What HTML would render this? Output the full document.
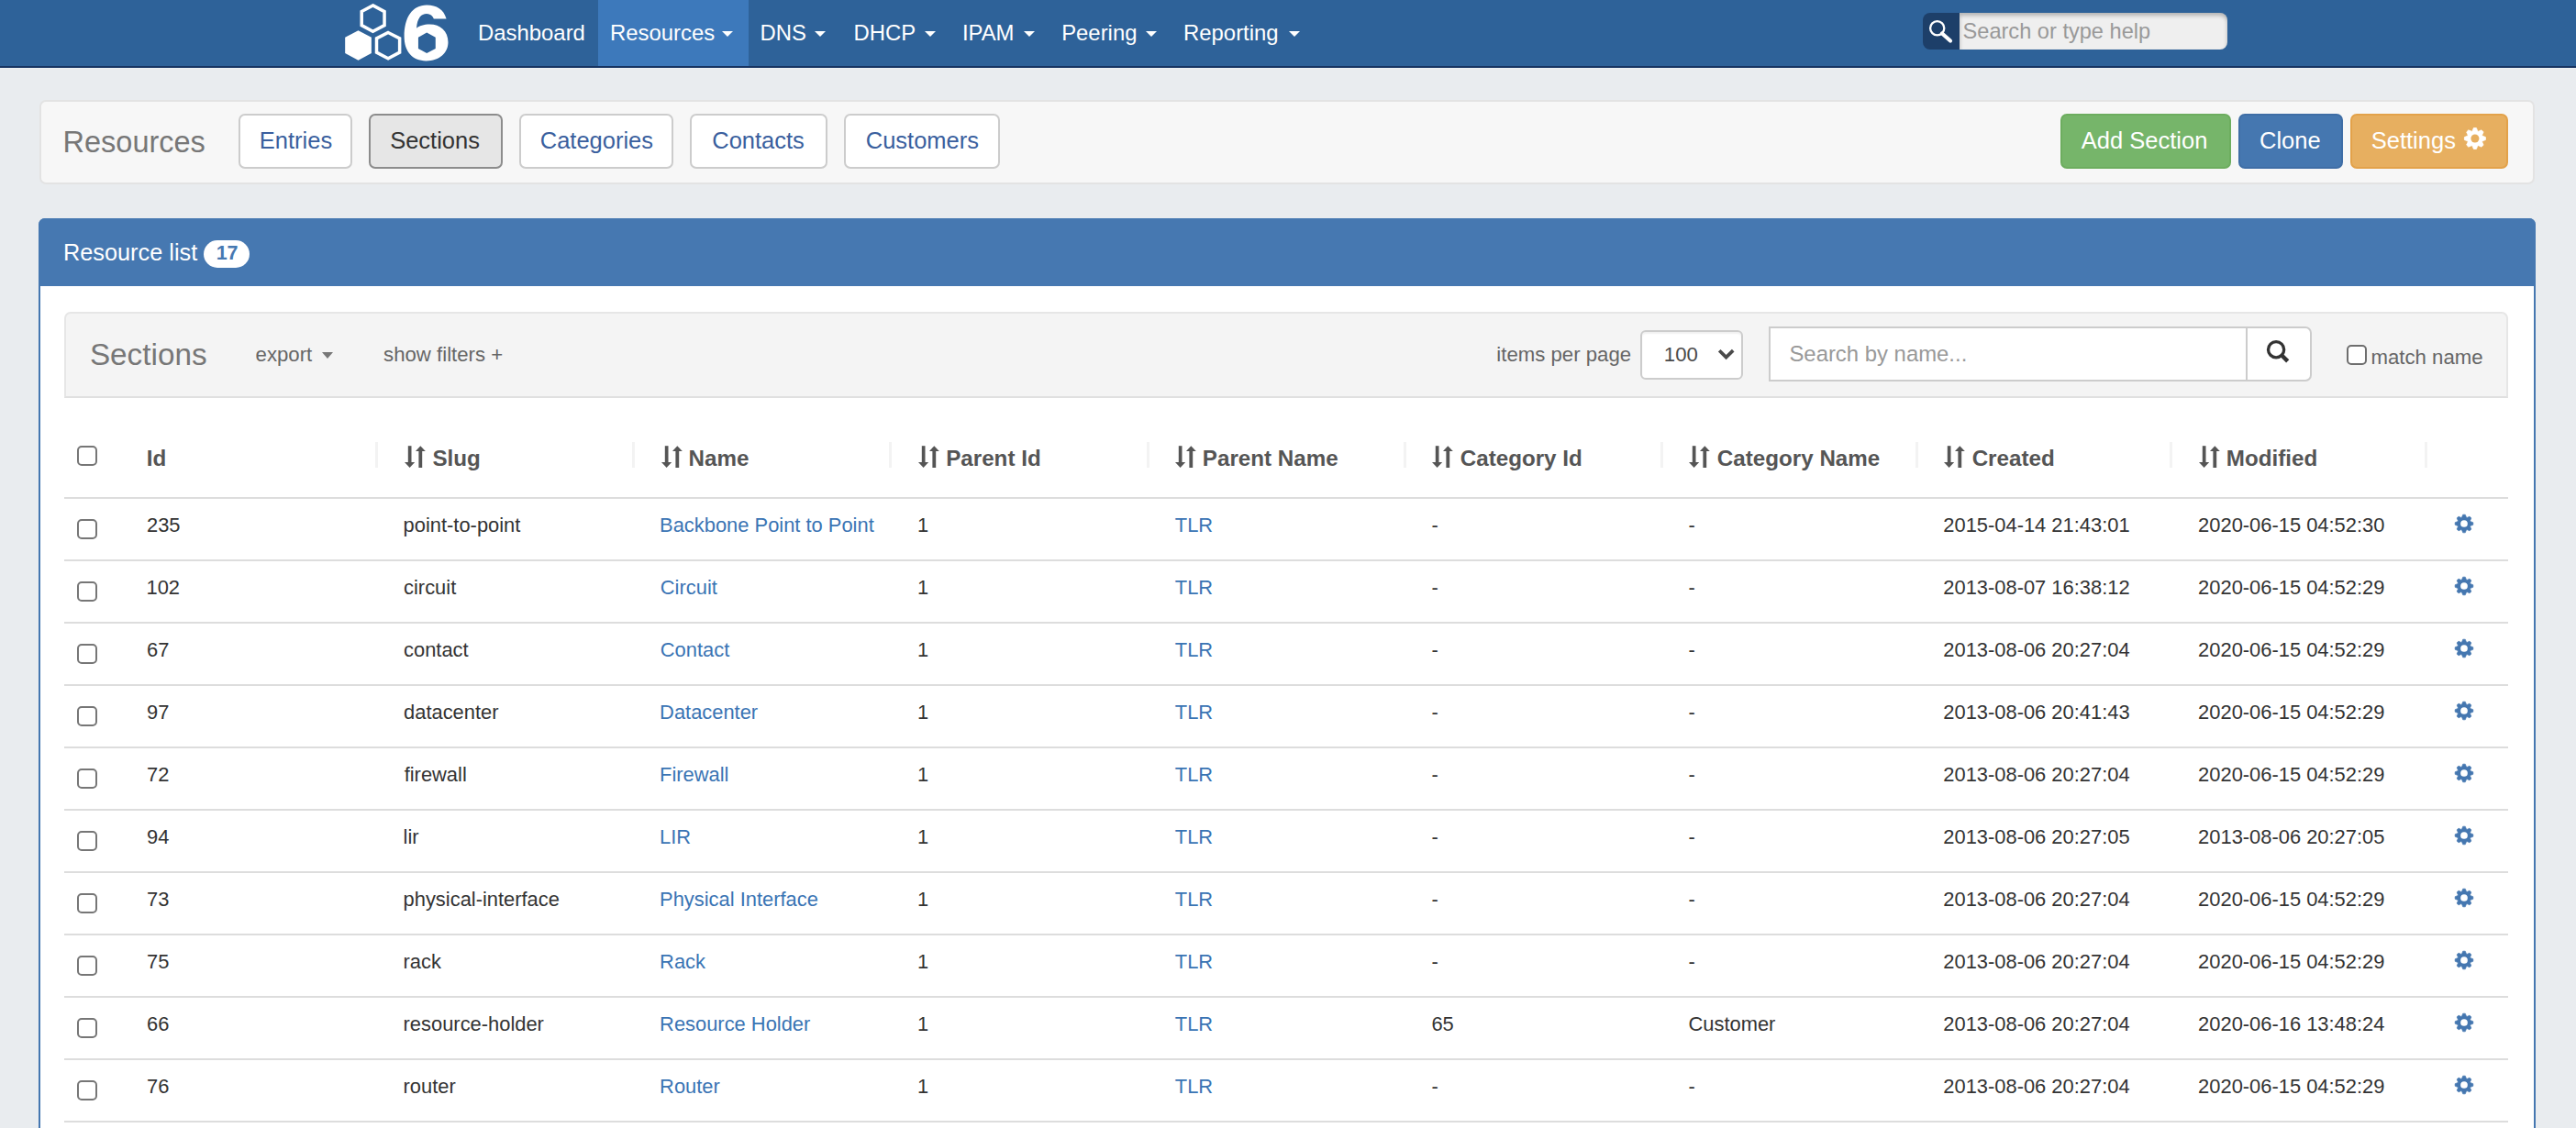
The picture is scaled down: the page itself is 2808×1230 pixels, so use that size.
<!DOCTYPE html><html><head><meta charset="utf-8"><style>
html,body{margin:0;padding:0;overflow:hidden;}
body{width:2808px;height:1230px;overflow:hidden;position:relative;background:#e9ecef;font-family:"Liberation Sans",sans-serif;}
.t{position:absolute;white-space:nowrap;}
.r{position:absolute;box-sizing:border-box;}
</style></head><body>
<div class="r" style="left:0px;top:0px;width:2808px;height:72px;background:#2e6299;"></div>
<div class="r" style="left:0px;top:72px;width:2808px;height:2px;background:#173462;"></div>
<div class="r" style="left:0px;top:74px;width:2808px;height:1px;background:#eef1f3;"></div>
<div class="r" style="left:652px;top:0px;width:164px;height:72px;background:#3d79bb;"></div>
<svg style="position:absolute;left:365px;top:0px" width="130" height="72" viewBox="0 0 2037 1128">
<polygon points="650,92 847,197 847,433 650,538 458,433 458,197" fill="none" stroke="#fff" stroke-width="55"/>
<polygon points="400,520 625,640 625,910 400,1030 175,910 175,640" fill="#fff"/>
<polygon points="910,557 1107,655 1107,895 910,998 713,895 713,655" fill="none" stroke="#fff" stroke-width="55"/>
<path fill="#fff" fill-rule="evenodd" d="M1905,320 C1860,160 1740,85 1570,85 C1320,85 1185,300 1185,620 C1185,880 1320,1040 1560,1040 C1790,1040 1935,900 1935,720 C1935,530 1800,415 1620,415 C1520,415 1440,445 1395,480 C1410,310 1470,235 1570,235 C1630,235 1670,270 1690,320 Z M1570,555 L1720,640 L1720,830 L1570,910 L1425,830 L1425,640 Z"/>
</svg>
<div class="t" style="left:521.03px;top:23.67px;font-size:23.9px;line-height:23.9px;color:#fff;">Dashboard</div>
<div class="t" style="left:665.03px;top:23.67px;font-size:23.9px;line-height:23.9px;color:#fff;">Resources</div>
<div class="t" style="left:828.53px;top:23.67px;font-size:23.9px;line-height:23.9px;color:#fff;">DNS</div>
<div class="t" style="left:930.53px;top:23.67px;font-size:23.9px;line-height:23.9px;color:#fff;">DHCP</div>
<div class="t" style="left:1048.89px;top:23.67px;font-size:23.9px;line-height:23.9px;color:#fff;">IPAM</div>
<div class="t" style="left:1157.13px;top:23.67px;font-size:23.9px;line-height:23.9px;color:#fff;">Peering</div>
<div class="t" style="left:1290.03px;top:23.67px;font-size:23.9px;line-height:23.9px;color:#fff;">Reporting</div>
<div class="r" style="left:786.5px;top:34px;width:0;height:0;border-left:6.75px solid transparent;border-right:6.75px solid transparent;border-top:6.50px solid #fff;"></div>
<div class="r" style="left:888.3px;top:34px;width:0;height:0;border-left:6.75px solid transparent;border-right:6.75px solid transparent;border-top:6.50px solid #fff;"></div>
<div class="r" style="left:1007.9px;top:34px;width:0;height:0;border-left:6.75px solid transparent;border-right:6.75px solid transparent;border-top:6.50px solid #fff;"></div>
<div class="r" style="left:1116.2px;top:34px;width:0;height:0;border-left:6.75px solid transparent;border-right:6.75px solid transparent;border-top:6.50px solid #fff;"></div>
<div class="r" style="left:1249.2px;top:34px;width:0;height:0;border-left:6.75px solid transparent;border-right:6.75px solid transparent;border-top:6.50px solid #fff;"></div>
<div class="r" style="left:1404.5px;top:34px;width:0;height:0;border-left:6.75px solid transparent;border-right:6.75px solid transparent;border-top:6.50px solid #fff;"></div>
<div class="r" style="left:2096px;top:14px;width:40px;height:40px;background:#1d3f69;border-radius:8px 0 0 8px;"></div>
<div class="r" style="left:2136px;top:14px;width:292px;height:40px;background:#efefef;border-radius:0 8px 8px 0;box-shadow:inset 0 3px 4px rgba(0,0,0,0.25);"></div>
<svg style="position:absolute;left:2096px;top:14px" width="40" height="40" viewBox="0 0 40 40">
<circle cx="15.7" cy="16.7" r="7.6" fill="none" stroke="#fff" stroke-width="2.3"/>
<line x1="21" y1="22.5" x2="30" y2="30.5" stroke="#fff" stroke-width="4.2" stroke-linecap="round"/>
</svg>
<div class="t" style="left:2139.54px;top:22.62px;font-size:23.6px;line-height:23.6px;color:#999;">Search or type help</div>
<div class="r" style="left:43px;top:109px;width:2720px;height:92px;background:#f7f7f7;border:2px solid #e3e3e3;border-radius:7px;"></div>
<div class="t" style="left:68.52px;top:138.89px;font-size:32.5px;line-height:32.5px;color:#777;">Resources</div>
<div class="r" style="left:260px;top:124px;width:124px;height:60px;background:#fff;border:2px solid #ccc;border-radius:7px;"></div>
<div class="r" style="left:402px;top:124px;width:146px;height:60px;background:#e6e6e6;border:2px solid #8c8c8c;border-radius:7px;"></div>
<div class="r" style="left:566px;top:124px;width:168px;height:60px;background:#fff;border:2px solid #ccc;border-radius:7px;"></div>
<div class="r" style="left:752px;top:124px;width:149.5px;height:60px;background:#fff;border:2px solid #ccc;border-radius:7px;"></div>
<div class="r" style="left:920px;top:124px;width:170px;height:60px;background:#fff;border:2px solid #ccc;border-radius:7px;"></div>
<div class="t" style="left:282.80px;top:141.21px;font-size:25.5px;line-height:25.5px;color:#3a5f9e;">Entries</div>
<div class="t" style="left:425.15px;top:141.21px;font-size:25.5px;line-height:25.5px;color:#333;">Sections</div>
<div class="t" style="left:588.73px;top:141.21px;font-size:25.5px;line-height:25.5px;color:#3a5f9e;">Categories</div>
<div class="t" style="left:776.23px;top:141.21px;font-size:25.5px;line-height:25.5px;color:#3a5f9e;">Contacts</div>
<div class="t" style="left:943.73px;top:141.21px;font-size:25.5px;line-height:25.5px;color:#3a5f9e;">Customers</div>
<div class="r" style="left:2246px;top:124px;width:186px;height:60px;background:#76b56a;border:2px solid #6dad5f;border-radius:7px;"></div>
<div class="r" style="left:2440px;top:124px;width:114px;height:60px;background:#4577b0;border:2px solid #3f6ea6;border-radius:7px;"></div>
<div class="r" style="left:2562px;top:124px;width:172px;height:60px;background:#e7af60;border:2px solid #e3a24a;border-radius:7px;"></div>
<div class="t" style="left:2268.84px;top:141.01px;font-size:25.5px;line-height:25.5px;color:#fff;">Add Section</div>
<div class="t" style="left:2463.03px;top:141.01px;font-size:25.5px;line-height:25.5px;color:#fff;">Clone</div>
<div class="t" style="left:2584.75px;top:141.01px;font-size:25.5px;line-height:25.5px;color:#fff;">Settings</div>
<svg style="position:absolute;left:2680px;top:135px" width="36" height="36" viewBox="0 0 36 36"><path d="M15.12,7.88 L16.40,4.50 L19.40,4.50 L20.68,7.88 A8.58,8.58 0 0 1 21.68,8.29 L24.97,6.80 L27.10,8.93 L25.61,12.22 A8.58,8.58 0 0 1 26.02,13.22 L29.40,14.50 L29.40,17.50 L26.02,18.78 A8.58,8.58 0 0 1 25.61,19.78 L27.10,23.07 L24.97,25.20 L21.68,23.71 A8.58,8.58 0 0 1 20.68,24.12 L19.40,27.50 L16.40,27.50 L15.12,24.12 A8.58,8.58 0 0 1 14.12,23.71 L10.83,25.20 L8.70,23.07 L10.19,19.78 A8.58,8.58 0 0 1 9.78,18.78 L6.40,17.50 L6.40,14.50 L9.78,13.22 A8.58,8.58 0 0 1 10.19,12.22 L8.70,8.93 L10.83,6.80 L14.12,8.29 A8.58,8.58 0 0 1 15.12,7.88 Z" fill="#fff" stroke="#fff" stroke-width="0.81" stroke-linejoin="round"/><circle cx="17.9" cy="16.0" r="4.52" fill="#e7af60"/></svg>
<div class="r" style="left:42px;top:238px;width:2722px;height:992px;background:#fff;border:2px solid #4577b0;border-bottom:0;border-radius:7px 7px 0 0;"></div>
<div class="r" style="left:42px;top:238px;width:2722px;height:74px;background:#4678b1;border-radius:7px 7px 0 0;"></div>
<div class="t" style="left:69.01px;top:262.98px;font-size:25.3px;line-height:25.3px;color:#fff;">Resource list</div>
<div class="r" style="left:222px;top:262px;width:50px;height:30px;background:#fff;border-radius:15px;"></div>
<div class="t" style="left:235.66px;top:265.70px;font-size:21.5px;line-height:21.5px;color:#4678b1;font-weight:bold;">17</div>
<div class="r" style="left:70px;top:340px;width:2664px;height:94px;background:#f4f4f4;border:2px solid #e6e6e6;border-bottom-color:#e0e0e0;border-radius:7px 7px 0 0;"></div>
<div class="t" style="left:97.90px;top:369.91px;font-size:33.3px;line-height:33.3px;color:#777;">Sections</div>
<div class="t" style="left:278.56px;top:375.51px;font-size:22.2px;line-height:22.2px;color:#666;">export</div>
<div class="r" style="left:350.8px;top:384px;width:0;height:0;border-left:6.50px solid transparent;border-right:6.50px solid transparent;border-top:7.70px solid #777;"></div>
<div class="t" style="left:418.09px;top:375.51px;font-size:22.2px;line-height:22.2px;color:#666;">show filters +</div>
<div class="t" style="left:1631.30px;top:375.51px;font-size:22.2px;line-height:22.2px;color:#666;">items per page</div>
<div class="r" style="left:1788px;top:360px;width:112px;height:54px;background:#fff;border:2px solid #ccc;border-radius:6px;box-shadow:inset 0 2px 2px rgba(0,0,0,0.06);"></div>
<div class="t" style="left:1813.84px;top:375.51px;font-size:22.2px;line-height:22.2px;color:#4a4a4a;">100</div>
<svg style="position:absolute;left:1870px;top:377px" width="24" height="18" viewBox="0 0 24 18"><polyline points="4.2,5.2 11.6,12.6 19.2,5.2" fill="none" stroke="#4a4a4a" stroke-width="3.7"/></svg>
<div class="r" style="left:1928px;top:356px;width:592px;height:60px;background:#fff;border:2px solid #ccc;border-radius:0 7px 7px 0;"></div>
<div class="r" style="left:2448px;top:356px;width:2px;height:60px;background:#ccc;"></div>
<div class="t" style="left:1950.42px;top:374.07px;font-size:23.9px;line-height:23.9px;color:#999;">Search by name...</div>
<svg style="position:absolute;left:2466px;top:368px" width="34" height="34" viewBox="0 0 34 34"><circle cx="15.1" cy="13.2" r="8.6" fill="none" stroke="#333" stroke-width="3.3"/><line x1="20.8" y1="19" x2="27.7" y2="25.9" stroke="#333" stroke-width="4.4" stroke-linecap="butt"/></svg>
<div class="r" style="left:2558px;top:376px;width:22px;height:22px;background:#fff;border:2px solid #6e6e6e;border-radius:5px;"></div>
<div class="t" style="left:2584.50px;top:379.21px;font-size:22.2px;line-height:22.2px;color:#666;">match name</div>
<div class="r" style="left:84px;top:486px;width:22px;height:22px;background:#fff;border:2px solid #767676;border-radius:5px;"></div>
<div class="t" style="left:159.77px;top:487.51px;font-size:24.2px;line-height:24.2px;color:#555;font-weight:bold;">Id</div>
<div class="r" style="left:409px;top:482px;width:3px;height:28px;background:#f3f3f3;"></div>
<div class="r" style="left:689px;top:482px;width:3px;height:28px;background:#f3f3f3;"></div>
<div class="r" style="left:969px;top:482px;width:3px;height:28px;background:#f3f3f3;"></div>
<div class="r" style="left:1249.5px;top:482px;width:3px;height:28px;background:#f3f3f3;"></div>
<div class="r" style="left:1529.5px;top:482px;width:3px;height:28px;background:#f3f3f3;"></div>
<div class="r" style="left:1809.5px;top:482px;width:3px;height:28px;background:#f3f3f3;"></div>
<div class="r" style="left:2087.5px;top:482px;width:3px;height:28px;background:#f3f3f3;"></div>
<div class="r" style="left:2365.3px;top:482px;width:3px;height:28px;background:#f3f3f3;"></div>
<div class="r" style="left:2643.2px;top:482px;width:3px;height:28px;background:#f3f3f3;"></div>
<svg style="position:absolute;left:439.7px;top:484px" width="26" height="28" viewBox="0 0 26 28">
<rect x="4.8" y="2.2" width="3.7" height="19" fill="#555"/><polygon points="1,20 12.2,20 6.6,26" fill="#555"/>
<rect x="16.4" y="7" width="3.8" height="19" fill="#555"/><polygon points="13,8 23.8,8 18.3,2.2" fill="#555"/>
</svg>
<div class="t" style="left:471.47px;top:487.51px;font-size:24.2px;line-height:24.2px;color:#555;font-weight:bold;">Slug</div>
<svg style="position:absolute;left:719.6px;top:484px" width="26" height="28" viewBox="0 0 26 28">
<rect x="4.8" y="2.2" width="3.7" height="19" fill="#555"/><polygon points="1,20 12.2,20 6.6,26" fill="#555"/>
<rect x="16.4" y="7" width="3.8" height="19" fill="#555"/><polygon points="13,8 23.8,8 18.3,2.2" fill="#555"/>
</svg>
<div class="t" style="left:750.47px;top:487.51px;font-size:24.2px;line-height:24.2px;color:#555;font-weight:bold;">Name</div>
<svg style="position:absolute;left:1000.3px;top:484px" width="26" height="28" viewBox="0 0 26 28">
<rect x="4.8" y="2.2" width="3.7" height="19" fill="#555"/><polygon points="1,20 12.2,20 6.6,26" fill="#555"/>
<rect x="16.4" y="7" width="3.8" height="19" fill="#555"/><polygon points="13,8 23.8,8 18.3,2.2" fill="#555"/>
</svg>
<div class="t" style="left:1031.17px;top:487.51px;font-size:24.2px;line-height:24.2px;color:#555;font-weight:bold;">Parent Id</div>
<svg style="position:absolute;left:1280.0px;top:484px" width="26" height="28" viewBox="0 0 26 28">
<rect x="4.8" y="2.2" width="3.7" height="19" fill="#555"/><polygon points="1,20 12.2,20 6.6,26" fill="#555"/>
<rect x="16.4" y="7" width="3.8" height="19" fill="#555"/><polygon points="13,8 23.8,8 18.3,2.2" fill="#555"/>
</svg>
<div class="t" style="left:1310.87px;top:487.51px;font-size:24.2px;line-height:24.2px;color:#555;font-weight:bold;">Parent Name</div>
<svg style="position:absolute;left:1560.2px;top:484px" width="26" height="28" viewBox="0 0 26 28">
<rect x="4.8" y="2.2" width="3.7" height="19" fill="#555"/><polygon points="1,20 12.2,20 6.6,26" fill="#555"/>
<rect x="16.4" y="7" width="3.8" height="19" fill="#555"/><polygon points="13,8 23.8,8 18.3,2.2" fill="#555"/>
</svg>
<div class="t" style="left:1591.73px;top:487.51px;font-size:24.2px;line-height:24.2px;color:#555;font-weight:bold;">Category Id</div>
<svg style="position:absolute;left:1840.3px;top:484px" width="26" height="28" viewBox="0 0 26 28">
<rect x="4.8" y="2.2" width="3.7" height="19" fill="#555"/><polygon points="1,20 12.2,20 6.6,26" fill="#555"/>
<rect x="16.4" y="7" width="3.8" height="19" fill="#555"/><polygon points="13,8 23.8,8 18.3,2.2" fill="#555"/>
</svg>
<div class="t" style="left:1871.83px;top:487.51px;font-size:24.2px;line-height:24.2px;color:#555;font-weight:bold;">Category Name</div>
<svg style="position:absolute;left:2118.1px;top:484px" width="26" height="28" viewBox="0 0 26 28">
<rect x="4.8" y="2.2" width="3.7" height="19" fill="#555"/><polygon points="1,20 12.2,20 6.6,26" fill="#555"/>
<rect x="16.4" y="7" width="3.8" height="19" fill="#555"/><polygon points="13,8 23.8,8 18.3,2.2" fill="#555"/>
</svg>
<div class="t" style="left:2149.63px;top:487.51px;font-size:24.2px;line-height:24.2px;color:#555;font-weight:bold;">Created</div>
<svg style="position:absolute;left:2395.9px;top:484px" width="26" height="28" viewBox="0 0 26 28">
<rect x="4.8" y="2.2" width="3.7" height="19" fill="#555"/><polygon points="1,20 12.2,20 6.6,26" fill="#555"/>
<rect x="16.4" y="7" width="3.8" height="19" fill="#555"/><polygon points="13,8 23.8,8 18.3,2.2" fill="#555"/>
</svg>
<div class="t" style="left:2426.77px;top:487.51px;font-size:24.2px;line-height:24.2px;color:#555;font-weight:bold;">Modified</div>
<div class="r" style="left:70px;top:542px;width:2664px;height:2px;background:#ddd;"></div>
<div class="r" style="left:84px;top:566px;width:22px;height:22px;background:#fff;border:2px solid #767676;border-radius:5px;"></div>
<div class="t" style="left:160.01px;top:562.46px;font-size:21.9px;line-height:21.9px;color:#333;">235</div>
<div class="t" style="left:439.58px;top:562.46px;font-size:21.9px;line-height:21.9px;color:#333;">point-to-point</div>
<div class="t" style="left:719.09px;top:562.46px;font-size:21.9px;line-height:21.9px;color:#3a74b4;">Backbone Point to Point</div>
<div class="t" style="left:999.96px;top:562.46px;font-size:21.9px;line-height:21.9px;color:#333;">1</div>
<div class="t" style="left:1280.81px;top:562.46px;font-size:21.9px;line-height:21.9px;color:#3a74b4;">TLR</div>
<div class="t" style="left:1560.51px;top:562.46px;font-size:21.9px;line-height:21.9px;color:#333;">-</div>
<div class="t" style="left:1840.61px;top:562.46px;font-size:21.9px;line-height:21.9px;color:#333;">-</div>
<div class="t" style="left:2118.31px;top:562.46px;font-size:21.9px;line-height:21.9px;color:#333;">2015-04-14 21:43:01</div>
<div class="t" style="left:2396.11px;top:562.46px;font-size:21.9px;line-height:21.9px;color:#333;">2020-06-15 04:52:30</div>
<svg style="position:absolute;left:2673.8px;top:559.4px" width="24" height="24" viewBox="0 0 24 24"><path d="M9.63,5.07 L10.72,2.18 L13.28,2.18 L14.37,5.07 A7.33,7.33 0 0 1 15.22,5.42 L18.03,4.15 L19.85,5.97 L18.58,8.78 A7.33,7.33 0 0 1 18.93,9.63 L21.82,10.72 L21.82,13.28 L18.93,14.37 A7.33,7.33 0 0 1 18.58,15.22 L19.85,18.03 L18.03,19.85 L15.22,18.58 A7.33,7.33 0 0 1 14.37,18.93 L13.28,21.82 L10.72,21.82 L9.63,18.93 A7.33,7.33 0 0 1 8.78,18.58 L5.97,19.85 L4.15,18.03 L5.42,15.22 A7.33,7.33 0 0 1 5.07,14.37 L2.18,13.28 L2.18,10.72 L5.07,9.63 A7.33,7.33 0 0 1 5.42,8.78 L4.15,5.97 L5.97,4.15 L8.78,5.42 A7.33,7.33 0 0 1 9.63,5.07 Z" fill="#4577b0" stroke="#4577b0" stroke-width="0.69" stroke-linejoin="round"/><circle cx="12" cy="12" r="3.86" fill="#fff"/></svg>
<div class="r" style="left:70px;top:610px;width:2664px;height:2px;background:#ddd;"></div>
<div class="r" style="left:84px;top:634px;width:22px;height:22px;background:#fff;border:2px solid #767676;border-radius:5px;"></div>
<div class="t" style="left:159.46px;top:630.46px;font-size:21.9px;line-height:21.9px;color:#333;">102</div>
<div class="t" style="left:440.07px;top:630.46px;font-size:21.9px;line-height:21.9px;color:#333;">circuit</div>
<div class="t" style="left:719.80px;top:630.46px;font-size:21.9px;line-height:21.9px;color:#3a74b4;">Circuit</div>
<div class="t" style="left:999.96px;top:630.46px;font-size:21.9px;line-height:21.9px;color:#333;">1</div>
<div class="t" style="left:1280.81px;top:630.46px;font-size:21.9px;line-height:21.9px;color:#3a74b4;">TLR</div>
<div class="t" style="left:1560.51px;top:630.46px;font-size:21.9px;line-height:21.9px;color:#333;">-</div>
<div class="t" style="left:1840.61px;top:630.46px;font-size:21.9px;line-height:21.9px;color:#333;">-</div>
<div class="t" style="left:2118.31px;top:630.46px;font-size:21.9px;line-height:21.9px;color:#333;">2013-08-07 16:38:12</div>
<div class="t" style="left:2396.11px;top:630.46px;font-size:21.9px;line-height:21.9px;color:#333;">2020-06-15 04:52:29</div>
<svg style="position:absolute;left:2673.8px;top:627.4px" width="24" height="24" viewBox="0 0 24 24"><path d="M9.63,5.07 L10.72,2.18 L13.28,2.18 L14.37,5.07 A7.33,7.33 0 0 1 15.22,5.42 L18.03,4.15 L19.85,5.97 L18.58,8.78 A7.33,7.33 0 0 1 18.93,9.63 L21.82,10.72 L21.82,13.28 L18.93,14.37 A7.33,7.33 0 0 1 18.58,15.22 L19.85,18.03 L18.03,19.85 L15.22,18.58 A7.33,7.33 0 0 1 14.37,18.93 L13.28,21.82 L10.72,21.82 L9.63,18.93 A7.33,7.33 0 0 1 8.78,18.58 L5.97,19.85 L4.15,18.03 L5.42,15.22 A7.33,7.33 0 0 1 5.07,14.37 L2.18,13.28 L2.18,10.72 L5.07,9.63 A7.33,7.33 0 0 1 5.42,8.78 L4.15,5.97 L5.97,4.15 L8.78,5.42 A7.33,7.33 0 0 1 9.63,5.07 Z" fill="#4577b0" stroke="#4577b0" stroke-width="0.69" stroke-linejoin="round"/><circle cx="12" cy="12" r="3.86" fill="#fff"/></svg>
<div class="r" style="left:70px;top:678px;width:2664px;height:2px;background:#ddd;"></div>
<div class="r" style="left:84px;top:702px;width:22px;height:22px;background:#fff;border:2px solid #767676;border-radius:5px;"></div>
<div class="t" style="left:160.01px;top:698.46px;font-size:21.9px;line-height:21.9px;color:#333;">67</div>
<div class="t" style="left:440.07px;top:698.46px;font-size:21.9px;line-height:21.9px;color:#333;">contact</div>
<div class="t" style="left:719.80px;top:698.46px;font-size:21.9px;line-height:21.9px;color:#3a74b4;">Contact</div>
<div class="t" style="left:999.96px;top:698.46px;font-size:21.9px;line-height:21.9px;color:#333;">1</div>
<div class="t" style="left:1280.81px;top:698.46px;font-size:21.9px;line-height:21.9px;color:#3a74b4;">TLR</div>
<div class="t" style="left:1560.51px;top:698.46px;font-size:21.9px;line-height:21.9px;color:#333;">-</div>
<div class="t" style="left:1840.61px;top:698.46px;font-size:21.9px;line-height:21.9px;color:#333;">-</div>
<div class="t" style="left:2118.31px;top:698.46px;font-size:21.9px;line-height:21.9px;color:#333;">2013-08-06 20:27:04</div>
<div class="t" style="left:2396.11px;top:698.46px;font-size:21.9px;line-height:21.9px;color:#333;">2020-06-15 04:52:29</div>
<svg style="position:absolute;left:2673.8px;top:695.4px" width="24" height="24" viewBox="0 0 24 24"><path d="M9.63,5.07 L10.72,2.18 L13.28,2.18 L14.37,5.07 A7.33,7.33 0 0 1 15.22,5.42 L18.03,4.15 L19.85,5.97 L18.58,8.78 A7.33,7.33 0 0 1 18.93,9.63 L21.82,10.72 L21.82,13.28 L18.93,14.37 A7.33,7.33 0 0 1 18.58,15.22 L19.85,18.03 L18.03,19.85 L15.22,18.58 A7.33,7.33 0 0 1 14.37,18.93 L13.28,21.82 L10.72,21.82 L9.63,18.93 A7.33,7.33 0 0 1 8.78,18.58 L5.97,19.85 L4.15,18.03 L5.42,15.22 A7.33,7.33 0 0 1 5.07,14.37 L2.18,13.28 L2.18,10.72 L5.07,9.63 A7.33,7.33 0 0 1 5.42,8.78 L4.15,5.97 L5.97,4.15 L8.78,5.42 A7.33,7.33 0 0 1 9.63,5.07 Z" fill="#4577b0" stroke="#4577b0" stroke-width="0.69" stroke-linejoin="round"/><circle cx="12" cy="12" r="3.86" fill="#fff"/></svg>
<div class="r" style="left:70px;top:746px;width:2664px;height:2px;background:#ddd;"></div>
<div class="r" style="left:84px;top:770px;width:22px;height:22px;background:#fff;border:2px solid #767676;border-radius:5px;"></div>
<div class="t" style="left:160.06px;top:766.46px;font-size:21.9px;line-height:21.9px;color:#333;">97</div>
<div class="t" style="left:440.07px;top:766.46px;font-size:21.9px;line-height:21.9px;color:#333;">datacenter</div>
<div class="t" style="left:719.09px;top:766.46px;font-size:21.9px;line-height:21.9px;color:#3a74b4;">Datacenter</div>
<div class="t" style="left:999.96px;top:766.46px;font-size:21.9px;line-height:21.9px;color:#333;">1</div>
<div class="t" style="left:1280.81px;top:766.46px;font-size:21.9px;line-height:21.9px;color:#3a74b4;">TLR</div>
<div class="t" style="left:1560.51px;top:766.46px;font-size:21.9px;line-height:21.9px;color:#333;">-</div>
<div class="t" style="left:1840.61px;top:766.46px;font-size:21.9px;line-height:21.9px;color:#333;">-</div>
<div class="t" style="left:2118.31px;top:766.46px;font-size:21.9px;line-height:21.9px;color:#333;">2013-08-06 20:41:43</div>
<div class="t" style="left:2396.11px;top:766.46px;font-size:21.9px;line-height:21.9px;color:#333;">2020-06-15 04:52:29</div>
<svg style="position:absolute;left:2673.8px;top:763.4px" width="24" height="24" viewBox="0 0 24 24"><path d="M9.63,5.07 L10.72,2.18 L13.28,2.18 L14.37,5.07 A7.33,7.33 0 0 1 15.22,5.42 L18.03,4.15 L19.85,5.97 L18.58,8.78 A7.33,7.33 0 0 1 18.93,9.63 L21.82,10.72 L21.82,13.28 L18.93,14.37 A7.33,7.33 0 0 1 18.58,15.22 L19.85,18.03 L18.03,19.85 L15.22,18.58 A7.33,7.33 0 0 1 14.37,18.93 L13.28,21.82 L10.72,21.82 L9.63,18.93 A7.33,7.33 0 0 1 8.78,18.58 L5.97,19.85 L4.15,18.03 L5.42,15.22 A7.33,7.33 0 0 1 5.07,14.37 L2.18,13.28 L2.18,10.72 L5.07,9.63 A7.33,7.33 0 0 1 5.42,8.78 L4.15,5.97 L5.97,4.15 L8.78,5.42 A7.33,7.33 0 0 1 9.63,5.07 Z" fill="#4577b0" stroke="#4577b0" stroke-width="0.69" stroke-linejoin="round"/><circle cx="12" cy="12" r="3.86" fill="#fff"/></svg>
<div class="r" style="left:70px;top:814px;width:2664px;height:2px;background:#ddd;"></div>
<div class="r" style="left:84px;top:838px;width:22px;height:22px;background:#fff;border:2px solid #767676;border-radius:5px;"></div>
<div class="t" style="left:160.01px;top:834.46px;font-size:21.9px;line-height:21.9px;color:#333;">72</div>
<div class="t" style="left:440.67px;top:834.46px;font-size:21.9px;line-height:21.9px;color:#333;">firewall</div>
<div class="t" style="left:719.09px;top:834.46px;font-size:21.9px;line-height:21.9px;color:#3a74b4;">Firewall</div>
<div class="t" style="left:999.96px;top:834.46px;font-size:21.9px;line-height:21.9px;color:#333;">1</div>
<div class="t" style="left:1280.81px;top:834.46px;font-size:21.9px;line-height:21.9px;color:#3a74b4;">TLR</div>
<div class="t" style="left:1560.51px;top:834.46px;font-size:21.9px;line-height:21.9px;color:#333;">-</div>
<div class="t" style="left:1840.61px;top:834.46px;font-size:21.9px;line-height:21.9px;color:#333;">-</div>
<div class="t" style="left:2118.31px;top:834.46px;font-size:21.9px;line-height:21.9px;color:#333;">2013-08-06 20:27:04</div>
<div class="t" style="left:2396.11px;top:834.46px;font-size:21.9px;line-height:21.9px;color:#333;">2020-06-15 04:52:29</div>
<svg style="position:absolute;left:2673.8px;top:831.4px" width="24" height="24" viewBox="0 0 24 24"><path d="M9.63,5.07 L10.72,2.18 L13.28,2.18 L14.37,5.07 A7.33,7.33 0 0 1 15.22,5.42 L18.03,4.15 L19.85,5.97 L18.58,8.78 A7.33,7.33 0 0 1 18.93,9.63 L21.82,10.72 L21.82,13.28 L18.93,14.37 A7.33,7.33 0 0 1 18.58,15.22 L19.85,18.03 L18.03,19.85 L15.22,18.58 A7.33,7.33 0 0 1 14.37,18.93 L13.28,21.82 L10.72,21.82 L9.63,18.93 A7.33,7.33 0 0 1 8.78,18.58 L5.97,19.85 L4.15,18.03 L5.42,15.22 A7.33,7.33 0 0 1 5.07,14.37 L2.18,13.28 L2.18,10.72 L5.07,9.63 A7.33,7.33 0 0 1 5.42,8.78 L4.15,5.97 L5.97,4.15 L8.78,5.42 A7.33,7.33 0 0 1 9.63,5.07 Z" fill="#4577b0" stroke="#4577b0" stroke-width="0.69" stroke-linejoin="round"/><circle cx="12" cy="12" r="3.86" fill="#fff"/></svg>
<div class="r" style="left:70px;top:882px;width:2664px;height:2px;background:#ddd;"></div>
<div class="r" style="left:84px;top:906px;width:22px;height:22px;background:#fff;border:2px solid #767676;border-radius:5px;"></div>
<div class="t" style="left:160.06px;top:902.46px;font-size:21.9px;line-height:21.9px;color:#333;">94</div>
<div class="t" style="left:439.52px;top:902.46px;font-size:21.9px;line-height:21.9px;color:#333;">lir</div>
<div class="t" style="left:719.09px;top:902.46px;font-size:21.9px;line-height:21.9px;color:#3a74b4;">LIR</div>
<div class="t" style="left:999.96px;top:902.46px;font-size:21.9px;line-height:21.9px;color:#333;">1</div>
<div class="t" style="left:1280.81px;top:902.46px;font-size:21.9px;line-height:21.9px;color:#3a74b4;">TLR</div>
<div class="t" style="left:1560.51px;top:902.46px;font-size:21.9px;line-height:21.9px;color:#333;">-</div>
<div class="t" style="left:1840.61px;top:902.46px;font-size:21.9px;line-height:21.9px;color:#333;">-</div>
<div class="t" style="left:2118.31px;top:902.46px;font-size:21.9px;line-height:21.9px;color:#333;">2013-08-06 20:27:05</div>
<div class="t" style="left:2396.11px;top:902.46px;font-size:21.9px;line-height:21.9px;color:#333;">2013-08-06 20:27:05</div>
<svg style="position:absolute;left:2673.8px;top:899.4px" width="24" height="24" viewBox="0 0 24 24"><path d="M9.63,5.07 L10.72,2.18 L13.28,2.18 L14.37,5.07 A7.33,7.33 0 0 1 15.22,5.42 L18.03,4.15 L19.85,5.97 L18.58,8.78 A7.33,7.33 0 0 1 18.93,9.63 L21.82,10.72 L21.82,13.28 L18.93,14.37 A7.33,7.33 0 0 1 18.58,15.22 L19.85,18.03 L18.03,19.85 L15.22,18.58 A7.33,7.33 0 0 1 14.37,18.93 L13.28,21.82 L10.72,21.82 L9.63,18.93 A7.33,7.33 0 0 1 8.78,18.58 L5.97,19.85 L4.15,18.03 L5.42,15.22 A7.33,7.33 0 0 1 5.07,14.37 L2.18,13.28 L2.18,10.72 L5.07,9.63 A7.33,7.33 0 0 1 5.42,8.78 L4.15,5.97 L5.97,4.15 L8.78,5.42 A7.33,7.33 0 0 1 9.63,5.07 Z" fill="#4577b0" stroke="#4577b0" stroke-width="0.69" stroke-linejoin="round"/><circle cx="12" cy="12" r="3.86" fill="#fff"/></svg>
<div class="r" style="left:70px;top:950px;width:2664px;height:2px;background:#ddd;"></div>
<div class="r" style="left:84px;top:974px;width:22px;height:22px;background:#fff;border:2px solid #767676;border-radius:5px;"></div>
<div class="t" style="left:160.01px;top:970.46px;font-size:21.9px;line-height:21.9px;color:#333;">73</div>
<div class="t" style="left:439.58px;top:970.46px;font-size:21.9px;line-height:21.9px;color:#333;">physical-interface</div>
<div class="t" style="left:719.09px;top:970.46px;font-size:21.9px;line-height:21.9px;color:#3a74b4;">Physical Interface</div>
<div class="t" style="left:999.96px;top:970.46px;font-size:21.9px;line-height:21.9px;color:#333;">1</div>
<div class="t" style="left:1280.81px;top:970.46px;font-size:21.9px;line-height:21.9px;color:#3a74b4;">TLR</div>
<div class="t" style="left:1560.51px;top:970.46px;font-size:21.9px;line-height:21.9px;color:#333;">-</div>
<div class="t" style="left:1840.61px;top:970.46px;font-size:21.9px;line-height:21.9px;color:#333;">-</div>
<div class="t" style="left:2118.31px;top:970.46px;font-size:21.9px;line-height:21.9px;color:#333;">2013-08-06 20:27:04</div>
<div class="t" style="left:2396.11px;top:970.46px;font-size:21.9px;line-height:21.9px;color:#333;">2020-06-15 04:52:29</div>
<svg style="position:absolute;left:2673.8px;top:967.4px" width="24" height="24" viewBox="0 0 24 24"><path d="M9.63,5.07 L10.72,2.18 L13.28,2.18 L14.37,5.07 A7.33,7.33 0 0 1 15.22,5.42 L18.03,4.15 L19.85,5.97 L18.58,8.78 A7.33,7.33 0 0 1 18.93,9.63 L21.82,10.72 L21.82,13.28 L18.93,14.37 A7.33,7.33 0 0 1 18.58,15.22 L19.85,18.03 L18.03,19.85 L15.22,18.58 A7.33,7.33 0 0 1 14.37,18.93 L13.28,21.82 L10.72,21.82 L9.63,18.93 A7.33,7.33 0 0 1 8.78,18.58 L5.97,19.85 L4.15,18.03 L5.42,15.22 A7.33,7.33 0 0 1 5.07,14.37 L2.18,13.28 L2.18,10.72 L5.07,9.63 A7.33,7.33 0 0 1 5.42,8.78 L4.15,5.97 L5.97,4.15 L8.78,5.42 A7.33,7.33 0 0 1 9.63,5.07 Z" fill="#4577b0" stroke="#4577b0" stroke-width="0.69" stroke-linejoin="round"/><circle cx="12" cy="12" r="3.86" fill="#fff"/></svg>
<div class="r" style="left:70px;top:1018px;width:2664px;height:2px;background:#ddd;"></div>
<div class="r" style="left:84px;top:1042px;width:22px;height:22px;background:#fff;border:2px solid #767676;border-radius:5px;"></div>
<div class="t" style="left:160.01px;top:1038.46px;font-size:21.9px;line-height:21.9px;color:#333;">75</div>
<div class="t" style="left:439.58px;top:1038.46px;font-size:21.9px;line-height:21.9px;color:#333;">rack</div>
<div class="t" style="left:719.09px;top:1038.46px;font-size:21.9px;line-height:21.9px;color:#3a74b4;">Rack</div>
<div class="t" style="left:999.96px;top:1038.46px;font-size:21.9px;line-height:21.9px;color:#333;">1</div>
<div class="t" style="left:1280.81px;top:1038.46px;font-size:21.9px;line-height:21.9px;color:#3a74b4;">TLR</div>
<div class="t" style="left:1560.51px;top:1038.46px;font-size:21.9px;line-height:21.9px;color:#333;">-</div>
<div class="t" style="left:1840.61px;top:1038.46px;font-size:21.9px;line-height:21.9px;color:#333;">-</div>
<div class="t" style="left:2118.31px;top:1038.46px;font-size:21.9px;line-height:21.9px;color:#333;">2013-08-06 20:27:04</div>
<div class="t" style="left:2396.11px;top:1038.46px;font-size:21.9px;line-height:21.9px;color:#333;">2020-06-15 04:52:29</div>
<svg style="position:absolute;left:2673.8px;top:1035.4px" width="24" height="24" viewBox="0 0 24 24"><path d="M9.63,5.07 L10.72,2.18 L13.28,2.18 L14.37,5.07 A7.33,7.33 0 0 1 15.22,5.42 L18.03,4.15 L19.85,5.97 L18.58,8.78 A7.33,7.33 0 0 1 18.93,9.63 L21.82,10.72 L21.82,13.28 L18.93,14.37 A7.33,7.33 0 0 1 18.58,15.22 L19.85,18.03 L18.03,19.85 L15.22,18.58 A7.33,7.33 0 0 1 14.37,18.93 L13.28,21.82 L10.72,21.82 L9.63,18.93 A7.33,7.33 0 0 1 8.78,18.58 L5.97,19.85 L4.15,18.03 L5.42,15.22 A7.33,7.33 0 0 1 5.07,14.37 L2.18,13.28 L2.18,10.72 L5.07,9.63 A7.33,7.33 0 0 1 5.42,8.78 L4.15,5.97 L5.97,4.15 L8.78,5.42 A7.33,7.33 0 0 1 9.63,5.07 Z" fill="#4577b0" stroke="#4577b0" stroke-width="0.69" stroke-linejoin="round"/><circle cx="12" cy="12" r="3.86" fill="#fff"/></svg>
<div class="r" style="left:70px;top:1086px;width:2664px;height:2px;background:#ddd;"></div>
<div class="r" style="left:84px;top:1110px;width:22px;height:22px;background:#fff;border:2px solid #767676;border-radius:5px;"></div>
<div class="t" style="left:160.01px;top:1106.46px;font-size:21.9px;line-height:21.9px;color:#333;">66</div>
<div class="t" style="left:439.58px;top:1106.46px;font-size:21.9px;line-height:21.9px;color:#333;">resource-holder</div>
<div class="t" style="left:719.09px;top:1106.46px;font-size:21.9px;line-height:21.9px;color:#3a74b4;">Resource Holder</div>
<div class="t" style="left:999.96px;top:1106.46px;font-size:21.9px;line-height:21.9px;color:#333;">1</div>
<div class="t" style="left:1280.81px;top:1106.46px;font-size:21.9px;line-height:21.9px;color:#3a74b4;">TLR</div>
<div class="t" style="left:1560.40px;top:1106.46px;font-size:21.9px;line-height:21.9px;color:#333;">65</div>
<div class="t" style="left:1840.50px;top:1106.46px;font-size:21.9px;line-height:21.9px;color:#333;">Customer</div>
<div class="t" style="left:2118.31px;top:1106.46px;font-size:21.9px;line-height:21.9px;color:#333;">2013-08-06 20:27:04</div>
<div class="t" style="left:2396.11px;top:1106.46px;font-size:21.9px;line-height:21.9px;color:#333;">2020-06-16 13:48:24</div>
<svg style="position:absolute;left:2673.8px;top:1103.4px" width="24" height="24" viewBox="0 0 24 24"><path d="M9.63,5.07 L10.72,2.18 L13.28,2.18 L14.37,5.07 A7.33,7.33 0 0 1 15.22,5.42 L18.03,4.15 L19.85,5.97 L18.58,8.78 A7.33,7.33 0 0 1 18.93,9.63 L21.82,10.72 L21.82,13.28 L18.93,14.37 A7.33,7.33 0 0 1 18.58,15.22 L19.85,18.03 L18.03,19.85 L15.22,18.58 A7.33,7.33 0 0 1 14.37,18.93 L13.28,21.82 L10.72,21.82 L9.63,18.93 A7.33,7.33 0 0 1 8.78,18.58 L5.97,19.85 L4.15,18.03 L5.42,15.22 A7.33,7.33 0 0 1 5.07,14.37 L2.18,13.28 L2.18,10.72 L5.07,9.63 A7.33,7.33 0 0 1 5.42,8.78 L4.15,5.97 L5.97,4.15 L8.78,5.42 A7.33,7.33 0 0 1 9.63,5.07 Z" fill="#4577b0" stroke="#4577b0" stroke-width="0.69" stroke-linejoin="round"/><circle cx="12" cy="12" r="3.86" fill="#fff"/></svg>
<div class="r" style="left:70px;top:1154px;width:2664px;height:2px;background:#ddd;"></div>
<div class="r" style="left:84px;top:1178px;width:22px;height:22px;background:#fff;border:2px solid #767676;border-radius:5px;"></div>
<div class="t" style="left:160.01px;top:1174.46px;font-size:21.9px;line-height:21.9px;color:#333;">76</div>
<div class="t" style="left:439.58px;top:1174.46px;font-size:21.9px;line-height:21.9px;color:#333;">router</div>
<div class="t" style="left:719.09px;top:1174.46px;font-size:21.9px;line-height:21.9px;color:#3a74b4;">Router</div>
<div class="t" style="left:999.96px;top:1174.46px;font-size:21.9px;line-height:21.9px;color:#333;">1</div>
<div class="t" style="left:1280.81px;top:1174.46px;font-size:21.9px;line-height:21.9px;color:#3a74b4;">TLR</div>
<div class="t" style="left:1560.51px;top:1174.46px;font-size:21.9px;line-height:21.9px;color:#333;">-</div>
<div class="t" style="left:1840.61px;top:1174.46px;font-size:21.9px;line-height:21.9px;color:#333;">-</div>
<div class="t" style="left:2118.31px;top:1174.46px;font-size:21.9px;line-height:21.9px;color:#333;">2013-08-06 20:27:04</div>
<div class="t" style="left:2396.11px;top:1174.46px;font-size:21.9px;line-height:21.9px;color:#333;">2020-06-15 04:52:29</div>
<svg style="position:absolute;left:2673.8px;top:1171.4px" width="24" height="24" viewBox="0 0 24 24"><path d="M9.63,5.07 L10.72,2.18 L13.28,2.18 L14.37,5.07 A7.33,7.33 0 0 1 15.22,5.42 L18.03,4.15 L19.85,5.97 L18.58,8.78 A7.33,7.33 0 0 1 18.93,9.63 L21.82,10.72 L21.82,13.28 L18.93,14.37 A7.33,7.33 0 0 1 18.58,15.22 L19.85,18.03 L18.03,19.85 L15.22,18.58 A7.33,7.33 0 0 1 14.37,18.93 L13.28,21.82 L10.72,21.82 L9.63,18.93 A7.33,7.33 0 0 1 8.78,18.58 L5.97,19.85 L4.15,18.03 L5.42,15.22 A7.33,7.33 0 0 1 5.07,14.37 L2.18,13.28 L2.18,10.72 L5.07,9.63 A7.33,7.33 0 0 1 5.42,8.78 L4.15,5.97 L5.97,4.15 L8.78,5.42 A7.33,7.33 0 0 1 9.63,5.07 Z" fill="#4577b0" stroke="#4577b0" stroke-width="0.69" stroke-linejoin="round"/><circle cx="12" cy="12" r="3.86" fill="#fff"/></svg>
<div class="r" style="left:70px;top:1222px;width:2664px;height:2px;background:#ddd;"></div>
</body></html>
